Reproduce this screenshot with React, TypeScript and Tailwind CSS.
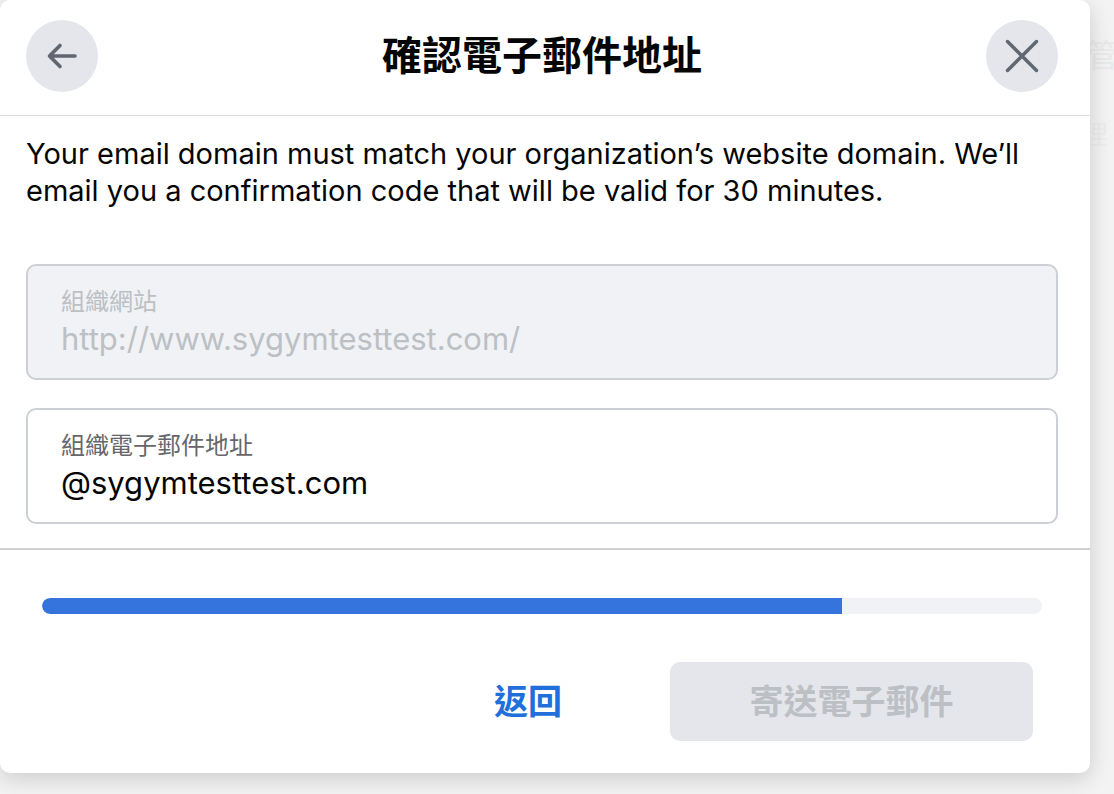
import { useState } from "react";

// Confirm organization email dialog (zh-TW)

const BackArrow = () => (
  <svg width="32" height="28" viewBox="0 0 32 28" fill="none">
    <path
      d="M29 14H4M14 3.5L3.5 14L14 24.5"
      stroke="#606770"
      strokeWidth="3.6"
      strokeLinecap="round"
      strokeLinejoin="round"
    />
  </svg>
);

const CloseX = () => (
  <svg width="34" height="34" viewBox="0 0 34 34" fill="none">
    <path
      d="M2.5 2.5L31.5 31.5M31.5 2.5L2.5 31.5"
      stroke="#606770"
      strokeWidth="3.4"
      strokeLinecap="round"
    />
  </svg>
);

export default function App() {
  const [email] = useState("@sygymtesttest.com");
  const progress = 80;

  return (
    <div className="flex h-[794px] w-[1114px] overflow-hidden bg-[#f3f3f3] font-['Inter','Noto_Sans_CJK_TC',sans-serif]">
      {/* Dialog */}
      <div className="relative z-10 flex h-[773px] w-[1090px] shrink-0 flex-col rounded-[10px] bg-white shadow-[0_6px_22px_rgba(0,0,0,0.16)]">
        {/* Header */}
        <div className="flex h-[116px] shrink-0 items-start border-b border-[#dadde1] pl-[26px] pr-[32px] pt-[20px]">
          <button className="flex h-[72px] w-[72px] items-center justify-center rounded-full bg-[#e4e6eb]">
            <BackArrow />
          </button>
          <div className="flex h-[72px] flex-1 items-center justify-center text-[40px] font-bold text-[#050505]">
            確認電子郵件地址
          </div>
          <button className="flex h-[72px] w-[72px] items-center justify-center rounded-full bg-[#e4e6eb]">
            <CloseX />
          </button>
        </div>

        {/* Body */}
        <div className="flex flex-col pl-[26px] pr-[32px]">
          <p className="h-[93px] pt-[19px] text-[29px] leading-[37px] text-[#050505]">
            Your email domain must match your organization’s website domain. We’ll email you a
            confirmation code that will be valid for 30 minutes.
          </p>

          <div className="mt-[55px] h-[116px] rounded-[10px] border-2 border-[#ccd0d5] bg-[#f0f2f5] pl-[33px] pt-[21px]">
            <div className="text-[24px] leading-[30px] text-[#bcc0c4]">組織網站</div>
            <div className="mt-[4px] text-[31px] leading-[36px] text-[#bcc0c4]">
              http://www.sygymtesttest.com/
            </div>
          </div>

          <div className="mt-[28px] h-[116px] rounded-[10px] border-2 border-[#ccd0d5] bg-white pl-[33px] pt-[21px]">
            <div className="text-[24px] leading-[30px] text-[#65676b]">組織電子郵件地址</div>
            <div className="mt-[4px] text-[31px] leading-[36px] text-[#050505]">{email}</div>
          </div>
        </div>

        <div className="mt-[24px] h-[2px] w-full bg-[#ced0d4]" />

        {/* Progress */}
        <div className="mt-[48px] pl-[42px]">
          <div className="h-[16px] w-[1000px] overflow-hidden rounded-full bg-[#f0f2f5]">
            <div
              className="h-full rounded-l-full bg-[#3674dd]"
              style={{ width: `${progress}%` }}
            />
          </div>
        </div>

        {/* Footer */}
        <div className="mt-[48px] flex items-center justify-end gap-[76px] pr-[57px]">
          <button className="px-[32px] text-[34px] font-bold text-[#216fdb]">返回</button>
          <button className="flex h-[79px] w-[363px] items-center justify-center rounded-[10px] bg-[#e4e6eb] text-[34px] font-bold text-[#bcc0c4]">
            寄送電子郵件
          </button>
        </div>
      </div>

      {/* Page behind the overlay */}
      <div className="flex flex-1 flex-col overflow-hidden">
        <div className="-ml-[4px] mt-[38px] whitespace-nowrap text-[32px] leading-[36px] text-[#e9e9e9]">
          管
        </div>
        <div className="-ml-[8px] mt-[46px] whitespace-nowrap text-[26px] leading-[30px] text-[#ececec]">
          理
        </div>
      </div>
    </div>
  );
}
